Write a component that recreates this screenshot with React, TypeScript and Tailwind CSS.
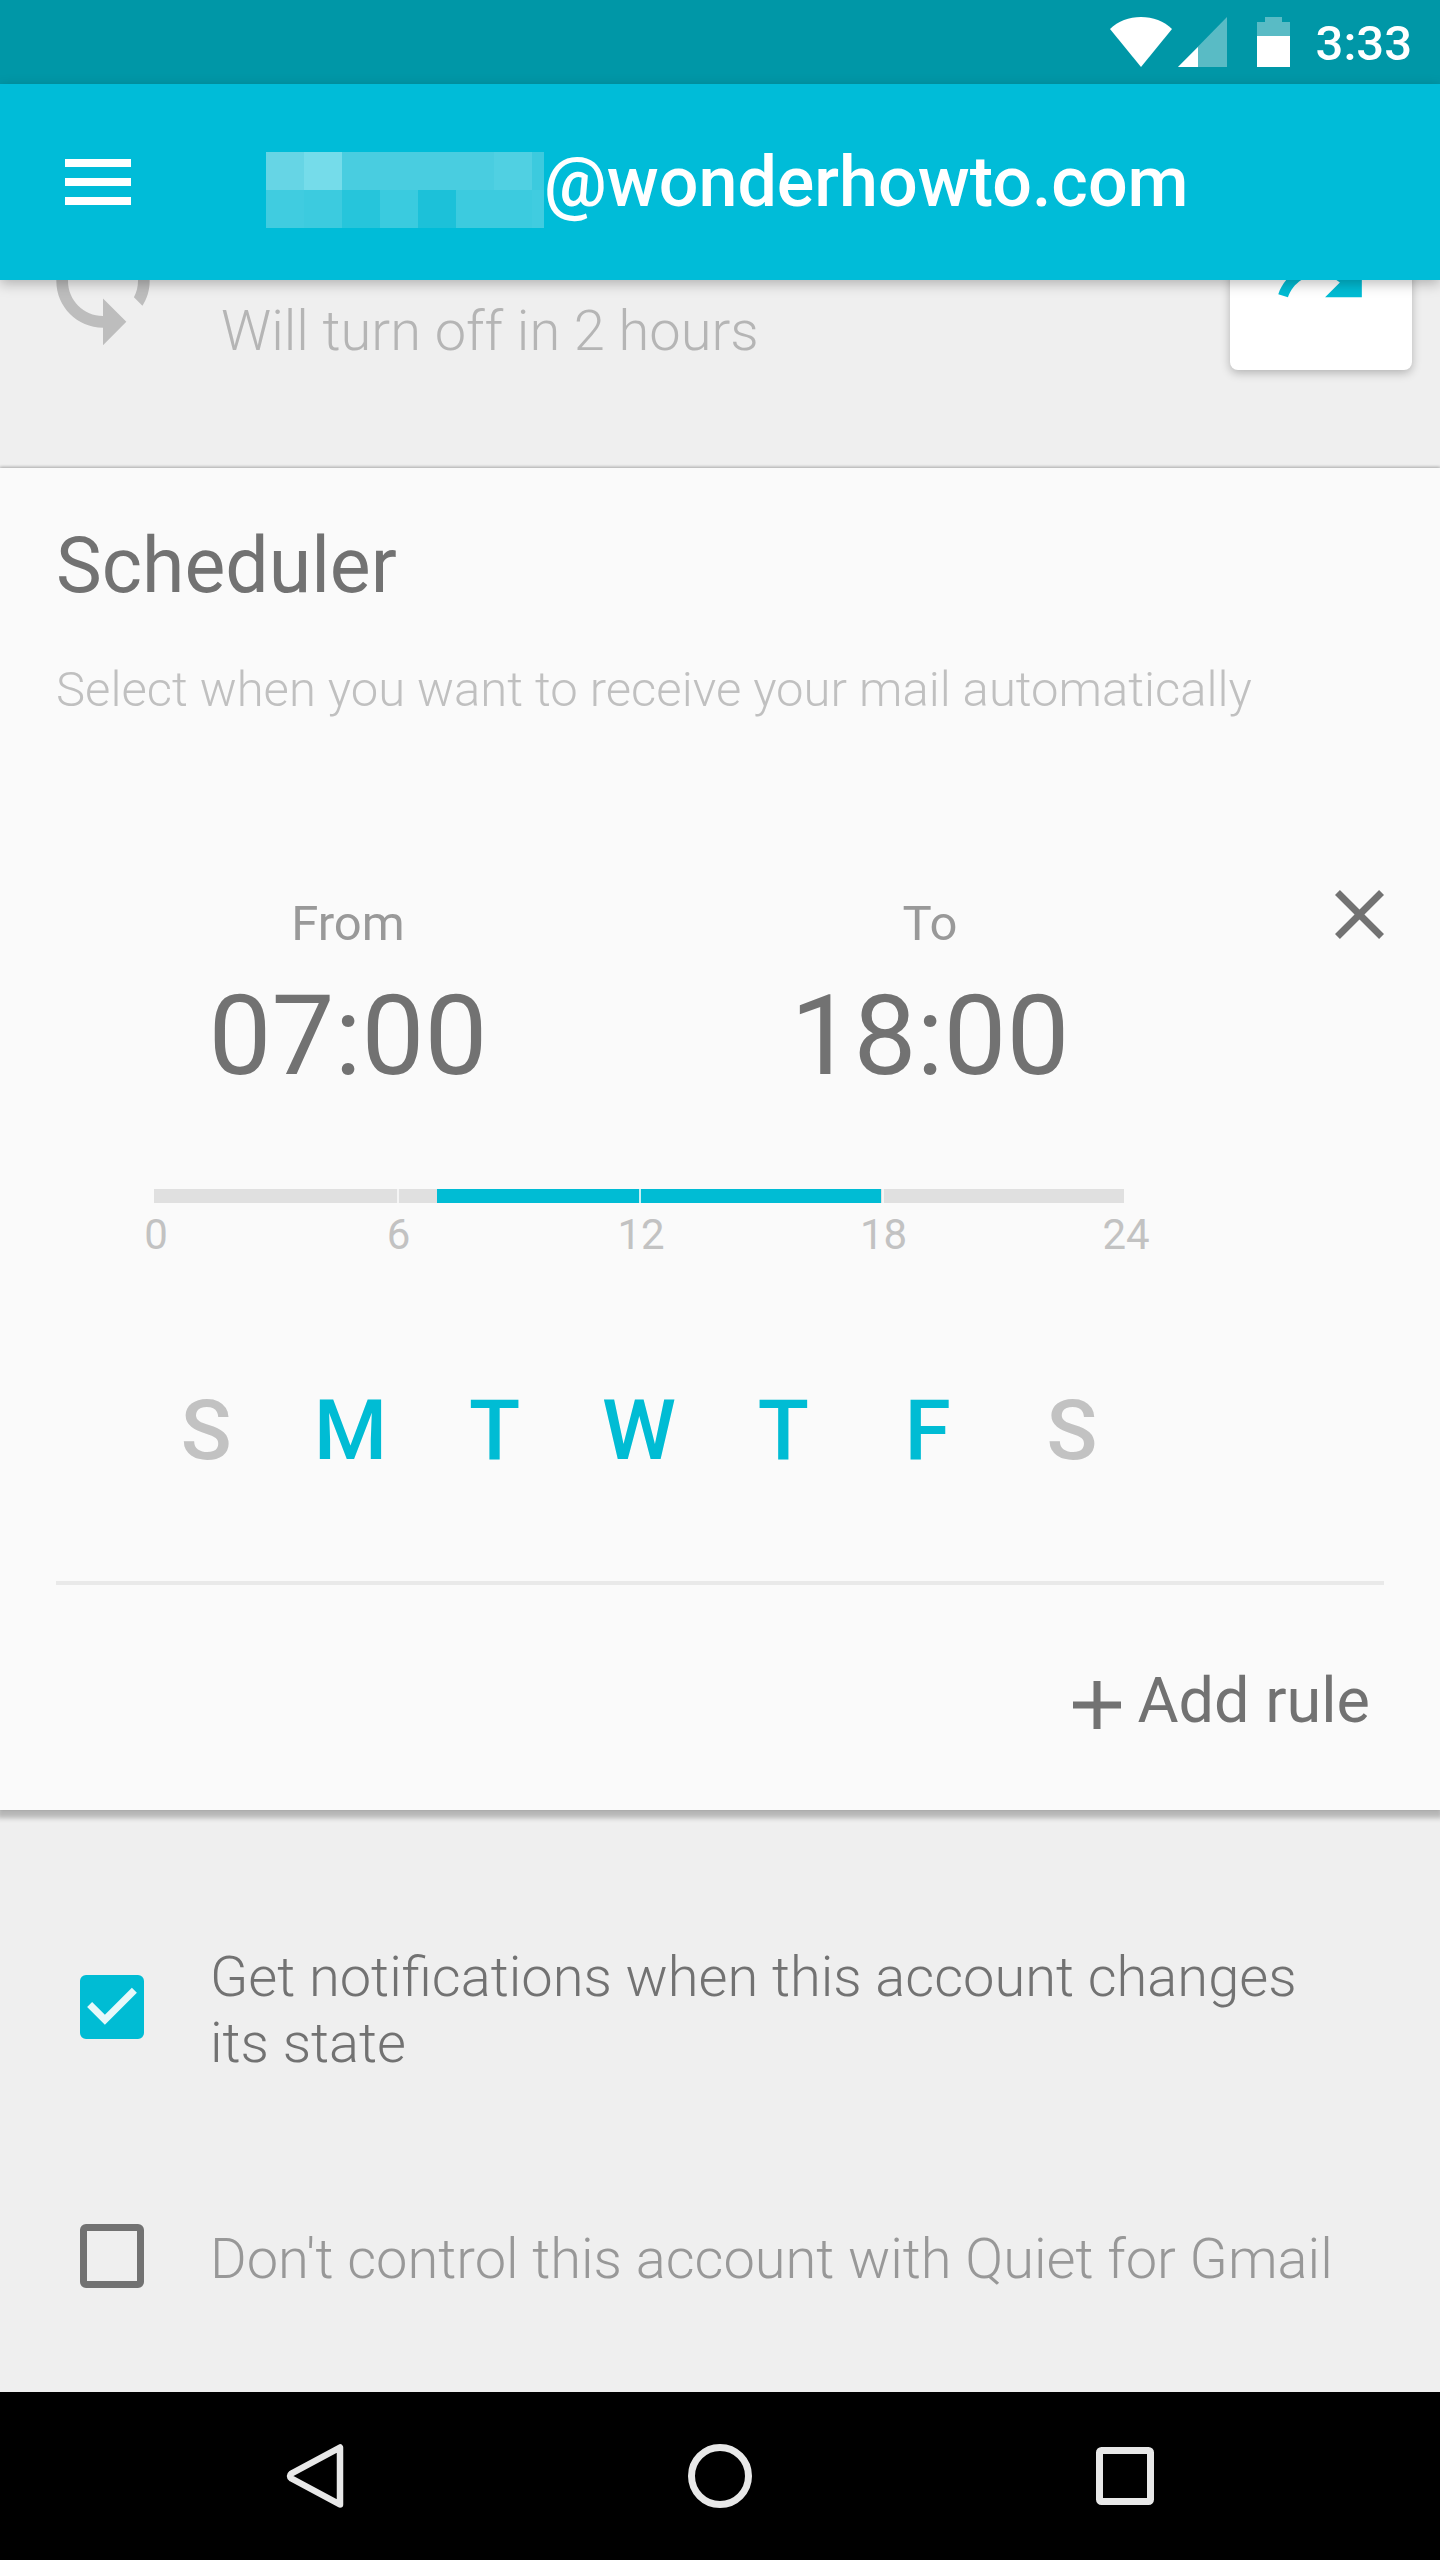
import React, { useState } from 'react';

const MOSAIC = [
  ['bg-[#66d5e5]', 'bg-[#75dcea]', 'bg-[#49cde0]', 'bg-[#49cde0]', 'bg-[#49cde0]', 'bg-[#49cde0]', 'bg-[#50d0e2]', 'bg-[#3ccade]'],
  ['bg-[#40cce0]', 'bg-[#3ccbdf]', 'bg-[#26c5db]', 'bg-[#3acbdf]', 'bg-[#1cc1d9]', 'bg-[#3ccbdf]', 'bg-[#3ccbdf]', 'bg-[#40cce0]'],
];

const HOURS = [0, 6, 12, 18, 24];
const DAY_LETTERS = ['S', 'M', 'T', 'W', 'T', 'F', 'S'];
const DAY_NAMES = ['Sunday', 'Monday', 'Tuesday', 'Wednesday', 'Thursday', 'Friday', 'Saturday'];

const toPercent = (hour: number) => `${(hour / 24) * 100}%`;

const StatusBar: React.FC = () => (
  <div className="flex h-[84px] items-center justify-end bg-[#0097a7] pr-7 text-white">
    <svg className="mr-1.5 h-[50px] w-[62px]" viewBox="0 0 62 50" fill="currentColor">
      <path d="M31 50 0 12C8 4 19 0 31 0s23 4 31 12z" />
    </svg>
    <svg className="mr-[30px] h-[50px] w-[49px]" viewBox="0 0 49 50" fill="currentColor">
      <path d="M49 0v50H0z" opacity="0.35" />
      <path d="M20 30v20H0z" />
    </svg>
    <svg className="mr-[26px] h-[50px] w-[33px]" viewBox="0 0 33 50" fill="currentColor">
      <path d="M8 0h17v5h8v14H0V5h8z" opacity="0.35" />
      <path d="M0 19h33v31H0z" />
    </svg>
    <span className="pt-1 text-[49px] leading-[56px] font-medium">3:33</span>
  </div>
);

const AppBar: React.FC = () => (
  <header className="relative z-10 flex h-[196px] items-center bg-[#00bcd8] pl-[65px] text-white shadow-[0_4px_12px_rgba(0,0,0,0.25)]">
    <button aria-label="Open menu" className="mr-[135px] flex flex-col gap-[11px]">
      <span className="h-2 w-[66px] bg-current" />
      <span className="h-2 w-[66px] bg-current" />
      <span className="h-2 w-[66px] bg-current" />
    </button>
    <div aria-hidden="true" className="flex flex-col pt-4">
      {MOSAIC.map((row, i) => (
        <div key={i} className="flex">
          {row.map((color, j) => (
            <span key={j} className={`h-[38px] w-[38px] last:w-3 ${color}`} />
          ))}
        </div>
      ))}
    </div>
    <h1 className="text-[70px] leading-[80px] font-medium">@wonderhowto.com</h1>
  </header>
);

const SyncStatus: React.FC = () => (
  <section className="flex h-[188px] flex-col justify-end overflow-hidden pr-7 pb-[98px] pl-[33px]">
    <div className="flex items-center gap-12">
      <svg className="h-[140px] w-[140px] shrink-0 text-[#bdbdbd]" viewBox="0 0 24 24" fill="currentColor">
        <path d="M12 4V1L8 5l4 4V6c3.31 0 6 2.69 6 6 0 1.01-.25 1.97-.7 2.8l1.46 1.46C19.54 15.03 20 13.57 20 12c0-4.42-3.58-8-8-8zm0 14c-3.31 0-6-2.69-6-6 0-1.01.25-1.97.7-2.8L5.24 7.74C4.46 8.97 4 10.43 4 12c0 4.42 3.58 8 8 8v3l4-4-4-4v3z" />
      </svg>
      <p className="flex-1 self-end text-[56px] leading-[78px] font-light text-[#b5b5b5]">Will turn off in 2 hours</p>
      <button
        aria-label="Resume"
        className="flex h-[178px] w-[182px] items-center justify-center rounded-lg bg-white text-[#00bcd4] shadow-[0_3px_10px_rgba(0,0,0,0.25)]"
      >
        <svg className="h-[98px] w-[98px]" viewBox="0 0 24 24" fill="currentColor">
          <path d="M18.4 10.6C16.55 8.99 14.15 8 11.5 8c-4.65 0-8.58 3.03-9.96 7.22L3.9 16c1.05-3.19 4.05-5.5 7.6-5.5 1.95 0 3.73.72 5.12 1.88L13 16h9V7l-3.6 3.6z" />
        </svg>
      </button>
    </div>
  </section>
);

const TimeField: React.FC<{ label: string; value: string }> = ({ label, value }) => (
  <button className="flex w-2/5 flex-col items-center gap-3.5">
    <span className="text-[49px] leading-[68px] text-[#999999]">{label}</span>
    <span className="text-[112px] leading-[128px] text-[#727272]">{value}</span>
  </button>
);

const HourScale: React.FC<{ from: number; to: number }> = ({ from, to }) => (
  <div className="mt-[89px]">
    <div className="relative h-3.5 bg-[#e0e0e0]">
      <div
        className="absolute inset-y-0 bg-[#00bcd4]"
        style={{ left: toPercent(from), width: toPercent(to - from) }}
      />
      {HOURS.slice(1, -1).map((hour) => (
        <div key={hour} className="absolute inset-y-0 w-0.5 bg-[#fafafa]/80" style={{ left: toPercent(hour) }} />
      ))}
    </div>
    <div className="mt-2 -mr-0.5 ml-0.5 flex justify-between text-[42px] leading-[48px] text-[#c2c2c2]">
      {HOURS.map((hour) => (
        <span key={hour} className="flex w-0 justify-center">{hour}</span>
      ))}
    </div>
  </div>
);

const Scheduler: React.FC = () => {
  const [days, setDays] = useState([false, true, true, true, true, true, false]);

  const toggleDay = (index: number) => {
    setDays(days.map((on, i) => (i === index ? !on : on)));
  };

  return (
    <section className="relative bg-[#fafafa] px-14 pt-[54px] pb-[73px] shadow-[0_5px_5px_3px_rgba(0,0,0,0.24),0_-1px_3px_rgba(0,0,0,0.25)]">
      <h2 className="text-[77px] leading-[88px] text-[#727272]">Scheduler</h2>
      <p className="mt-12 text-[49px] leading-[64px] font-light text-[#c0c0c0]">
        Select when you want to receive your mail automatically
      </p>

      <div className="mt-[168px] flex items-start pl-[98px]">
        <div className="flex-1">
          <div className="flex justify-between">
            <TimeField label="From" value="07:00" />
            <TimeField label="To" value="18:00" />
          </div>
          <HourScale from={7} to={18} />
          <div className="-mx-5 mt-[124px] grid grid-cols-7">
            {DAY_LETTERS.map((letter, i) => (
              <button
                key={i}
                aria-label={DAY_NAMES[i]}
                aria-pressed={days[i]}
                onClick={() => toggleDay(i)}
                className={`text-[84px] leading-[96px] font-medium ${days[i] ? 'text-[#00bcd4]' : 'text-[#c2c2c2]'}`}
              >
                {letter}
              </button>
            ))}
          </div>
        </div>
        <button aria-label="Remove rule" className="ml-[211px] text-[#727272]">
          <svg className="h-[49px] w-[49px]" viewBox="5 5 14 14" fill="currentColor">
            <path d="M19 6.41 17.59 5 12 10.59 6.41 5 5 6.41 10.59 12 5 17.59 6.41 19 12 13.41 17.59 19 19 17.59 13.41 12z" />
          </svg>
        </button>
      </div>

      <hr className="mt-[102px] border-t-4 border-[#e9e9e9]" />

      <div className="mt-20 flex justify-end pr-3.5">
        <button className="flex items-center gap-4 text-[63px] leading-[72px] text-[#727272]">
          <svg className="mt-2 h-12 w-12" viewBox="0 0 48 48" fill="currentColor">
            <path d="M20.5 0h7v20.5H48v7H27.5V48h-7V27.5H0v-7h20.5z" />
          </svg>
          Add rule
        </button>
      </div>
    </section>
  );
};

interface OptionProps {
  label: string;
  defaultChecked?: boolean;
  textClass: string;
}

const Option: React.FC<OptionProps> = ({ label, defaultChecked, textClass }) => (
  <label className="flex items-center gap-[66px]">
    <span className="relative h-16 w-16 shrink-0">
      <input
        type="checkbox"
        defaultChecked={defaultChecked}
        className="peer block h-16 w-16 appearance-none rounded-md border-[7px] border-[#727272] checked:border-[#00bcd4] checked:bg-[#00bcd4]"
      />
      <svg
        className="pointer-events-none absolute inset-0 hidden text-[#e6f8fa] peer-checked:block"
        viewBox="3 3 18 18"
        fill="currentColor"
      >
        <path d="M10 17l-5-5 1.41-1.41L10 14.17l7.59-7.59L19 8l-9 9z" />
      </svg>
    </span>
    <span className={`pt-1.5 text-[56px] leading-[66px] font-light ${textClass}`}>{label}</span>
  </label>
);

const NavBar: React.FC = () => (
  <nav className="grid h-[168px] grid-cols-3 bg-black px-28 text-[#e8e8e8]">
    <button aria-label="Back" className="flex items-center justify-center">
      <svg className="h-16 w-16" viewBox="0 0 64 64" fill="none" stroke="currentColor" strokeWidth="6.5" strokeLinejoin="round">
        <path d="M57 3.500v57L8.500 34.500q-3-2.500 0-5z" />
      </svg>
    </button>
    <button aria-label="Home" className="flex items-center justify-center">
      <svg className="h-16 w-16" viewBox="0 0 64 64" fill="none" stroke="currentColor" strokeWidth="7">
        <circle cx="32" cy="32" r="28.500" />
      </svg>
    </button>
    <button aria-label="Recent apps" className="flex items-center justify-center">
      <svg className="h-16 w-16" viewBox="0 0 64 64" fill="none" stroke="currentColor" strokeWidth="7">
        <rect x="6.500" y="6.500" width="51" height="51" rx="2" />
      </svg>
    </button>
  </nav>
);

export default function App() {
  return (
    <div className="flex min-h-screen flex-col bg-[#efefef] font-[Roboto,sans-serif]">
      <StatusBar />
      <AppBar />
      <main className="flex-1">
        <SyncStatus />
        <Scheduler />
        <section className="flex flex-col gap-36 px-20 pt-32 pb-[100px]">
          <Option
            label="Get notifications when this account changes its state"
            defaultChecked
            textClass="text-[#727272]"
          />
          <Option label="Don't control this account with Quiet for Gmail" textClass="text-[#989898]" />
        </section>
      </main>
      <NavBar />
    </div>
  );
}
